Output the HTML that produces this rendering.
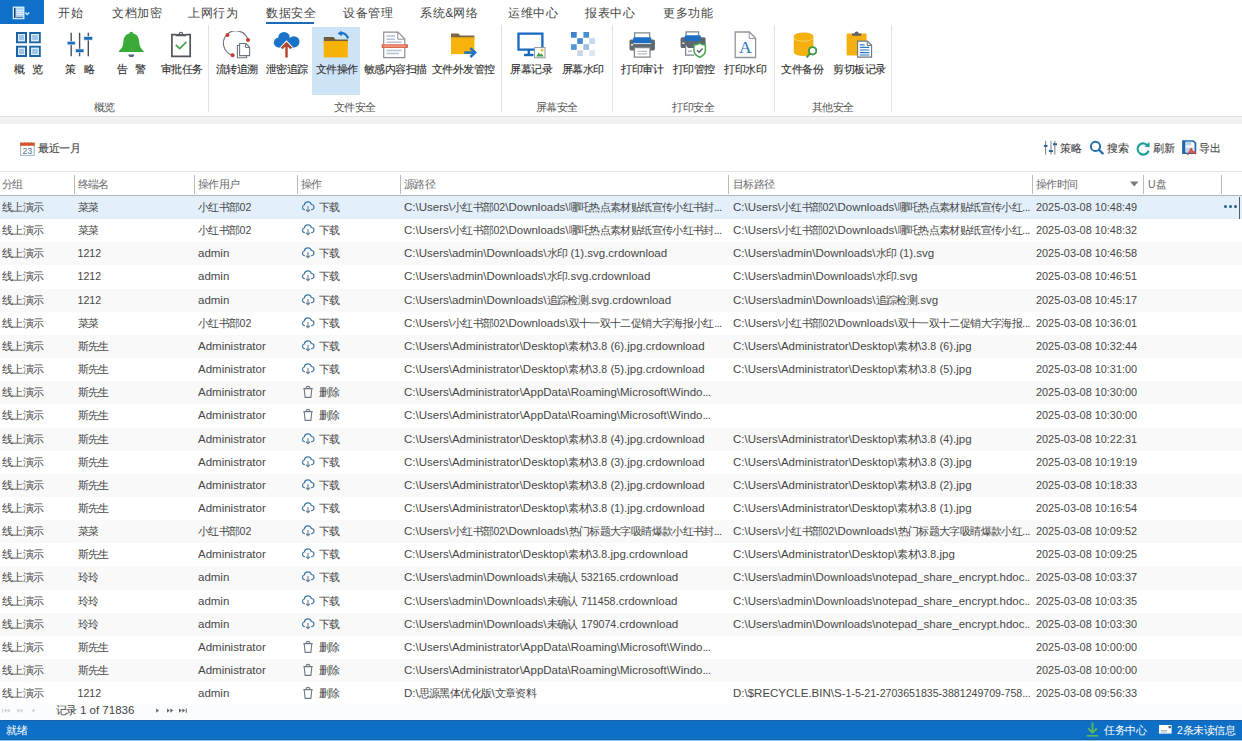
<!DOCTYPE html>
<html><head><meta charset="utf-8"><style>
*{margin:0;padding:0;box-sizing:border-box}
html,body{width:1242px;height:741px;overflow:hidden;background:#fff}
body{position:relative;font-family:"Liberation Sans",sans-serif;color:#3b3b3b}
i{font-style:normal} u{text-decoration:none;font-size:10.6px} s{text-decoration:none;letter-spacing:-0.6px}
.abs{position:absolute} .abs svg{display:block}
#appbtn{position:absolute;left:0;top:0;width:44px;height:24px;background:#106fc6}
.tab{position:absolute;top:4px;height:18px;line-height:18px;font-size:12px;color:#444;white-space:nowrap}
i.m{font-size:12px;letter-spacing:0.6px}
#ul{position:absolute;left:266px;top:22px;width:48px;height:2px;background:#1a6bb8}
#ribbon{position:absolute;left:0;top:24px;width:1242px;height:92px;background:#fff}
.ic{position:absolute}
.ic svg{display:block}
.rl{position:absolute;top:62px;width:80px;text-align:center;font-size:10.5px;line-height:14px;color:#2e2e2e;white-space:nowrap;word-spacing:5px}
i.gc{font-size:10.5px;letter-spacing:-0.5px}
i.rc{font-size:10.5px;letter-spacing:-0.5px;-webkit-text-stroke:0.1px}
.gl{position:absolute;top:100px;text-align:center;font-size:10.5px;line-height:14px;color:#555;white-space:nowrap}
.vs{position:absolute;top:25px;width:1px;height:87px;background:#e3e3e3}
#selbtn{position:absolute;left:312px;top:27px;width:48px;height:68px;background:#cde4f7}
#rbb{position:absolute;left:0;top:116px;width:1242px;height:1px;background:#dedede}
#band{position:absolute;left:0;top:117px;width:1242px;height:7px;background:linear-gradient(#f6f6f6,#eeeeee 75%,#f4f4f4)}
.tbt{position:absolute;top:141px;height:14px;line-height:14px;font-size:10.5px;color:#444;white-space:nowrap}
.tbi{position:absolute}
.tbi svg{display:block}
#hdr{position:absolute;left:0;top:171px;width:1242px;height:25px;background:#fff;border-top:1px solid #e4e4e4;border-bottom:1px solid #b4b4b4}
.ht{position:absolute;top:1px;height:23px;line-height:23px;font-size:10.5px;color:#6a6a6a;white-space:nowrap}
.hs{position:absolute;top:3px;width:1px;height:19px;background:#bababa}
.r{position:absolute;left:0;width:1242px;height:23.15px;background:#fff}
.r.g{background:#f9f9f9}
.r.sel{background:#e3f0fb}
.t{position:absolute;top:0;height:22px;line-height:22px;font-size:11.5px;color:#474747;white-space:nowrap;overflow:hidden}
i.c{font-size:10.5px;letter-spacing:-0.62px}
.t.dt{font-size:10.9px}
.oi{position:absolute;left:0px;top:4px}
.opl{margin-left:18px}
.dots{position:absolute;left:1224px;top:9px;width:14px;height:4px}
.dots b{display:block;position:absolute;top:0;width:3.4px;height:3.4px;border-radius:50%;background:#2a5f87}
.dots b:nth-child(2){left:5px} .dots b:nth-child(3){left:10px}
.cur{position:absolute;left:1238.5px;top:1px;width:1.5px;height:22px;background:#5a5a5a}
#pg{position:absolute;left:0;top:704px;width:1242px;height:16px;background:#fbfcfd}
#pgt{position:absolute;left:56px;top:703px;height:14px;line-height:14px;font-size:11.5px;color:#444;white-space:nowrap}
#status{position:absolute;left:0;top:720px;width:1242px;height:20px;background:#0e6fc6;border-top:1px solid #1a62a8;border-bottom:1px solid #1a64a8}
#sbot{position:absolute;left:0;top:740px;width:1242px;height:1px;background:#8dc0ea}
.st{position:absolute;top:723px;height:14px;line-height:14px;font-size:10.5px;color:#fff;white-space:nowrap}
</style></head><body>
<div id="appbtn"><svg style="position:absolute;left:12px;top:6px" width="20" height="14" viewBox="0 0 20 14"><rect x="1.4" y="1.2" width="10.4" height="11.4" fill="#a8cdef" stroke="#d6f3ff" stroke-width="1.3"/><rect x="2" y="1.8" width="1.4" height="10.2" fill="#123e6e"/><path d="M4.4 4.4H10.8M4.4 6.4H10.8M4.4 8.4H10.8" stroke="#eef8ff" stroke-width="0.9"/><path d="M4.2 11.6H11" stroke="#3c6e9e" stroke-width="1"/><path d="M13.2 6.4L15.2 8.4 17.2 6.4" fill="none" stroke="#c8ecff" stroke-width="1.4"/></svg></div>
<div class="tab" style="left:58px"><i class="m">开始</i></div><div class="tab" style="left:112px"><i class="m">文档加密</i></div><div class="tab" style="left:188px"><i class="m">上网行为</i></div><div class="tab" style="left:266px"><i class="m">数据安全</i></div><div class="tab" style="left:343px"><i class="m">设备管理</i></div><div class="tab" style="left:420px"><i class="m">系统</i>&amp;<i class="m">网络</i></div><div class="tab" style="left:508px"><i class="m">运维中心</i></div><div class="tab" style="left:585px"><i class="m">报表中心</i></div><div class="tab" style="left:663px"><i class="m">更多功能</i></div>
<div id="ul"></div>
<div id="selbtn"></div>
<div class="ic" style="left:15px;top:31px"><svg width="28" height="28" viewBox="0 0 28 28"><g fill="#1d64a6" fill-rule="evenodd"><path d="M1 1H12V12.2H1ZM3 3V10.2H10V3Z"/><path d="M14.2 1H25.8V12.2H14.2ZM16.2 3V10.2H23.8V3Z"/><path d="M1 14.8H12V26H1ZM3 16.8V24H10V16.8Z"/><path d="M14.2 14.8H25.8V26H14.2ZM16.2 16.8V24H23.8V16.8Z"/></g>
<g fill="#9fc4e8" stroke="#e2eefa" stroke-width="1"><rect x="3.5" y="3.5" width="6" height="6.2"/><rect x="16.7" y="3.5" width="6.6" height="6.2"/><rect x="3.5" y="17.3" width="6" height="6.2"/><rect x="16.7" y="17.3" width="6.6" height="6.2"/></g></svg></div><div class="rl" style="left:-11.5px"><i class="rc">概</i> <i class="rc">览</i></div><div class="ic" style="left:66px;top:32px"><svg width="28" height="26" viewBox="0 0 28 26"><g stroke="#4a5058" stroke-width="1.4"><path d="M5.2 0.7V24.3M13.6 0.7V24.3M22.3 0.7V24.3"/></g>
<g fill="#1e6db4" stroke="#d8e9f7" stroke-width="0.6"><rect x="1.2" y="9.4" width="8" height="3.4"/><rect x="9.6" y="17" width="8.3" height="3.4"/><rect x="17.9" y="4.7" width="8.7" height="3.4"/></g></svg></div><div class="rl" style="left:39.7px"><i class="rc">策</i> <i class="rc">略</i></div><div class="ic" style="left:118px;top:31px"><svg width="27" height="27" viewBox="0 0 27 27"><path d="M13.3 0.8C12.2 0.8 11.5 1.6 11.4 2.6 7.4 3.6 5.7 6.4 5.4 10.6 5.1 15 4.4 16.9 0.8 20.2V21H25.8V20.2C22.2 16.9 21.5 15 21.2 10.6 20.9 6.4 19.2 3.6 15.2 2.6 15.1 1.6 14.4 0.8 13.3 0.8Z" fill="#3aab39"/><path d="M10.4 23.4A2.9 2.6 0 0 0 16.2 23.4Z" fill="#4f6580"/></svg></div><div class="rl" style="left:91.5px"><i class="rc">告</i> <i class="rc">警</i></div><div class="ic" style="left:170px;top:31px"><svg width="22" height="27" viewBox="0 0 22 27"><path d="M6.2 3.6H1.9V25.3H20.2V3.6H16" fill="none" stroke="#50555c" stroke-width="1.7"/><path d="M5.6 5.2L6.4 3H8.8A2.2 2.2 0 0 1 13.2 3H15.6L16.4 5.2Z" fill="#50555c"/><circle cx="11" cy="2.6" r="0.8" fill="#fff"/><path d="M5.8 13.8L9.7 17.6 16.4 10.9" fill="none" stroke="#45a04a" stroke-width="1.7"/></svg></div><div class="rl" style="left:141.5px"><i class="rc">审批任务</i></div><div class="ic" style="left:222px;top:31px"><svg width="30" height="28" viewBox="0 0 30 28"><path d="M10.6 24.3A12.5 12.5 0 1 1 26 8.9" fill="none" stroke="#6b7580" stroke-width="1.1"/>
<circle cx="5.5" cy="3.9" r="2" fill="#c63b2f"/><circle cx="26" cy="8.9" r="2" fill="#c63b2f"/><circle cx="10.6" cy="24.3" r="2" fill="#c63b2f"/>
<path d="M17.6 14.5H15.4V26.8H24.5V24.6" fill="none" stroke="#6b7580" stroke-width="1.1"/><path d="M17.6 12.5H23.9L27.6 16.2V24.6H17.6Z" fill="#fff" stroke="#6b7580" stroke-width="1.1"/><path d="M23.6 12.6V16.5H27.5" fill="none" stroke="#6b7580" stroke-width="1"/></svg></div><div class="rl" style="left:196.7px"><i class="rc">流转追溯</i></div><div class="ic" style="left:272px;top:31px"><svg width="28" height="28" viewBox="0 0 28 28"><g fill="#1b73c8"><circle cx="12" cy="6.7" r="5.8"/><circle cx="21.9" cy="10.8" r="5.6"/><circle cx="6.6" cy="11.6" r="4.8"/><rect x="6.6" y="8" width="15.3" height="8.4"/></g><path d="M14.5 26.2V12.6M9.6 17.4L14.5 12.2 19.4 17.4" fill="none" stroke="#fff" stroke-width="4"/><path d="M14.5 26.4V12.6M9.8 17.4L14.5 12.4 19.2 17.4" fill="none" stroke="#b3432a" stroke-width="2.4"/></svg></div><div class="rl" style="left:246.7px"><i class="rc">泄密追踪</i></div><div class="ic" style="left:323px;top:31px"><svg width="30" height="28" viewBox="0 0 30 28"><path d="M0.8 5.9H10.6L12.4 8.5H24.8V12H0.8Z" fill="#705b3c"/><rect x="0.7" y="10" width="24.1" height="16.4" fill="#f7b20a"/><path d="M24.9 7.5A6.2 6.2 0 0 0 17.5 2.3" fill="none" stroke="#1b72c7" stroke-width="2.1"/><path d="M14.6 2.6L18.6 -0.4 18.9 5.2Z" fill="#1b72c7"/></svg></div><div class="rl" style="left:296.5px"><i class="rc">文件操作</i></div><div class="ic" style="left:381px;top:31px"><svg width="28" height="28" viewBox="0 0 28 28"><path d="M2.7 1.2H17L23.8 8V26.7H2.7Z" fill="#fff" stroke="#8a8f96" stroke-width="1.2"/><path d="M16.8 1.2V8.2H23.8" fill="none" stroke="#8a8f96" stroke-width="1"/>
<g stroke="#b5c2d3" stroke-width="1.4"><path d="M5.5 5H14M5.5 8.2H14M5.5 11.3H20.5M5.5 19.5H20.5M5.5 22.5H18"/></g>
<rect x="0.6" y="13.3" width="26.4" height="3.6" rx="0.6" fill="#e1664a"/><path d="M2.6 15.1H24.5" stroke="#f6c8b8" stroke-width="0.9"/></svg></div><div class="rl" style="left:355px"><i class="rc">敏感内容扫描</i></div><div class="ic" style="left:450px;top:33px"><svg width="28" height="26" viewBox="0 0 28 26"><path d="M1 0.6H8.4L10.2 2.4H24.4V6.2H1Z" fill="#7c6748"/><rect x="1" y="4.3" width="23.4" height="16.8" fill="#f6b30c"/><path d="M14.2 19.6H23.4" stroke="#1b72c7" stroke-width="2.5"/><path d="M20.4 15.2L25.2 19.6 20.4 24" fill="none" stroke="#1b72c7" stroke-width="2.5"/></svg></div><div class="rl" style="left:423.2px"><i class="rc">文件外发管控</i></div><div class="ic" style="left:517px;top:32px"><svg width="29" height="27" viewBox="0 0 29 27"><path d="M1.5 1.6H25.4V17.6H1.5Z" fill="#fff" stroke="#1768bf" stroke-width="2.3"/><path d="M7 23H16.5" stroke="#1768bf" stroke-width="2.4"/><path d="M11.8 17.5V22" stroke="#1768bf" stroke-width="2.4"/>
<rect x="17.6" y="15.6" width="10.4" height="10.2" fill="#fff" stroke="#8f979e" stroke-width="1"/><path d="M19.3 24.4L21.7 20.4 23.5 22.8 24.6 21.5 26.7 24.4Z" fill="#3d9b3f"/><circle cx="25.1" cy="18.3" r="1.2" fill="#f0b400"/></svg></div><div class="rl" style="left:491.29999999999995px"><i class="rc">屏幕记录</i></div><div class="ic" style="left:571px;top:32px"><svg width="25" height="25" viewBox="0 0 25 25"><rect x="0" y="0" width="5.7" height="5.7" fill="#3f84c9"/><rect x="12.4" y="0" width="5.7" height="5.7" fill="#4a8ccd"/>
<rect x="6.2" y="6.2" width="5.7" height="5.7" fill="#4a8ccd"/><rect x="18.2" y="6.2" width="5.7" height="5.7" fill="#c5d8ec"/>
<rect x="0" y="12.2" width="5.7" height="5.7" fill="#5796d2"/><rect x="12.4" y="12.2" width="5.7" height="5.7" fill="#9fc0e2"/>
<rect x="6.2" y="18.3" width="5.7" height="5.7" fill="#c8d7e6"/><rect x="18.2" y="18.3" width="5.7" height="5.7" fill="#dde6ef"/></svg></div><div class="rl" style="left:542.5px"><i class="rc">屏幕水印</i></div><div class="ic" style="left:629px;top:32px"><svg width="27" height="26" viewBox="0 0 27 26"><path d="M5.6 5.5V0.9H20.6V5.5" fill="#fff" stroke="#7f868e" stroke-width="1.3"/><rect x="0.5" y="7.4" width="25.4" height="11" rx="1.6" fill="#5f666f"/><rect x="4.2" y="5.2" width="18" height="6.4" rx="1" fill="#1c6fc3"/><path d="M4.2 11.6H22.2" stroke="#e8f1fa" stroke-width="0.9"/><path d="M5.4 15.5H21V25.2H5.4Z" fill="#fff" stroke="#7f868e" stroke-width="1.3"/><path d="M8.5 19.3H18M8.5 21.9H18" stroke="#a4aab0" stroke-width="1"/><rect x="2" y="12.2" width="2" height="1.4" fill="#fff"/></svg></div><div class="rl" style="left:602px"><i class="rc">打印审计</i></div><div class="ic" style="left:680px;top:31px"><svg width="28" height="27" viewBox="0 0 28 27"><path d="M6.1 4.4V0.8H18.6V4.4" fill="#fff" stroke="#7f868e" stroke-width="1.3"/><rect x="0.6" y="6.2" width="25" height="10.8" rx="1.6" fill="#5f666f"/><rect x="4.8" y="4.2" width="16" height="5.8" rx="1" fill="#1c6fc3"/><path d="M5.6 14V24.2H14" fill="#fff" stroke="#7f868e" stroke-width="1.3"/><rect x="2.4" y="11.5" width="2" height="1.4" fill="#fff"/><rect x="8" y="19.6" width="4" height="1.3" fill="#a4aab0"/>
<path d="M19.7 12.1C17.9 13.5 16.1 14 14 14.1V19.3C14 23 16.6 25 19.7 26.3 22.8 25 25.4 23 25.4 19.3V14.1C23.3 14 21.5 13.5 19.7 12.1Z" fill="#fff" stroke="#4aa64c" stroke-width="1.5"/><path d="M17 19.3L19.1 21.3 22.6 17.6" fill="none" stroke="#5a6068" stroke-width="1.4"/></svg></div><div class="rl" style="left:653.5px"><i class="rc">打印管控</i></div><div class="ic" style="left:734px;top:31px"><svg width="23" height="28" viewBox="0 0 23 28"><path d="M1.2 1H15.4L21.6 7.2V26.5H1.2Z" fill="#fff" stroke="#8f969d" stroke-width="1.3"/><path d="M15.2 1V7.4H21.6" fill="none" stroke="#8f969d" stroke-width="1"/><text x="11.4" y="21.6" text-anchor="middle" font-family="Liberation Serif" font-size="17.5" fill="#2a75bf">A</text></svg></div><div class="rl" style="left:705px"><i class="rc">打印水印</i></div><div class="ic" style="left:793px;top:32px"><svg width="24" height="28" viewBox="0 0 24 28"><path d="M0.8 4.2A9.8 3.8 0 0 1 20.4 4.2V20.2A9.8 3.8 0 0 1 0.8 20.2Z" fill="#f4b00e"/><path d="M0.8 5.4A9.8 3.8 0 0 0 20.4 5.4" fill="none" stroke="#ffd66a" stroke-width="1"/>
<circle cx="19.6" cy="18.8" r="3.7" fill="#fff" stroke="#3f9a46" stroke-width="1.9"/><path d="M17 21.4L13.6 25.4" stroke="#3f9a46" stroke-width="2.2"/></svg></div><div class="rl" style="left:762px"><i class="rc">文件备份</i></div><div class="ic" style="left:846px;top:31px"><svg width="28" height="28" viewBox="0 0 28 28"><rect x="0.6" y="2.4" width="20" height="22" rx="1" fill="#f4b00e"/><path d="M6 4.8V2.6H8.6A2 2 0 0 1 12.6 2.6H15.2V4.8Z" fill="#5d5f6e"/>
<path d="M11.6 10.1H21.4L25.6 14.3V26.1H11.6Z" fill="#fff" stroke="#6b7686" stroke-width="1.1"/><path d="M21.2 10.1V14.5H25.6" fill="none" stroke="#6b7686" stroke-width="1"/>
<g stroke="#2f79c2" stroke-width="1.2"><path d="M13.8 13.8H18.6M13.8 16.4H23.4M13.8 19H23.4M13.8 21.6H23.4M13.8 24H23.4"/></g></svg></div><div class="rl" style="left:819.4px"><i class="rc">剪切板记录</i></div><div class="gl" style="left:0px;width:208px"><i class="gc">概览</i></div><div class="gl" style="left:208px;width:293px"><i class="gc">文件安全</i></div><div class="gl" style="left:501px;width:111px"><i class="gc">屏幕安全</i></div><div class="gl" style="left:612px;width:162px"><i class="gc">打印安全</i></div><div class="gl" style="left:774px;width:117px"><i class="gc">其他安全</i></div><div class="vs" style="left:208px"></div><div class="vs" style="left:501px"></div><div class="vs" style="left:612px"></div><div class="vs" style="left:774px"></div><div class="vs" style="left:891px"></div>
<div id="rbb"></div><div id="band"></div>
<div class="tbi" style="left:20px;top:141px"><svg width="15" height="15" viewBox="0 0 15 15"><rect x="0.6" y="2.6" width="13.6" height="11.8" fill="#fff" stroke="#9fb3c6" stroke-width="1"/><rect x="0.1" y="1.6" width="14.6" height="3.2" fill="#d4562c"/><path d="M2 1.2V3M5 1.2V3M8 1.2V3M11 1.2V3" stroke="#d4562c" stroke-width="1"/><text x="7.4" y="13" text-anchor="middle" font-family="Liberation Sans" font-size="8.6" fill="#4f6f8f">23</text></svg></div>
<div class="tbt" style="left:38px"><i class="rc">最近一月</i></div>
<div class="tbi" style="left:1043px;top:140px"><svg width="15" height="16" viewBox="0 0 15 16"><g stroke="#7a8088" stroke-width="1"><path d="M2.6 0.8V14.6M8 0.8V14.6M11.9 0.8V14.6"/></g><g fill="#2f6a98"><rect x="0.9" y="4.9" width="3.6" height="2.1"/><rect x="5.9" y="10" width="4" height="2.1"/><rect x="10" y="3.2" width="4" height="2.1"/></g></svg></div><div class="tbt" style="left:1060px"><i class="rc">策略</i></div>
<div class="tbi" style="left:1089px;top:140px"><svg width="16" height="15" viewBox="0 0 16 15"><circle cx="6.5" cy="6.4" r="4.6" fill="none" stroke="#1f6dae" stroke-width="1.9"/><path d="M9.9 9.7L13.6 13.4" stroke="#1f6dae" stroke-width="2.3" stroke-linecap="round"/></svg></div><div class="tbt" style="left:1107px"><i class="rc">搜索</i></div>
<div class="tbi" style="left:1136px;top:141px"><svg width="15" height="15" viewBox="0 0 15 15"><path d="M12.2 5.4A5.6 5.6 0 1 0 12.6 9.6" fill="none" stroke="#1c9c95" stroke-width="2.1"/><path d="M8.3 5.6L13.4 0.9 13.6 6.2Z" fill="#1c9c95"/></svg></div><div class="tbt" style="left:1153px"><i class="rc">刷新</i></div>
<div class="tbi" style="left:1182px;top:140px"><svg width="15" height="16" viewBox="0 0 15 16"><path d="M1 1H11.2L13.4 3.2V13.2H1Z" fill="#fff" stroke="#1f65a8" stroke-width="1.7"/><path d="M1 1H3.4V13.2H1Z" fill="#1f65a8"/><rect x="4.2" y="1.8" width="5" height="3.6" fill="#b9d3ec"/><rect x="3.6" y="7.6" width="8" height="5" fill="#b9d3ec"/><path d="M5.4 15.2C6.6 13.4 8 11.4 9.2 8.2 9.6 11.2 11 13 13.8 13.8M6.8 12.6C8.6 11.8 11 11.6 13.6 12" fill="none" stroke="#e04a35" stroke-width="1.3"/></svg></div><div class="tbt" style="left:1199px"><i class="rc">导出</i></div>
<div id="hdr"><div class="ht" style="left:2px"><i class="c">分组</i></div><div class="ht" style="left:77.5px"><i class="c">终端名</i></div><div class="ht" style="left:198px"><i class="c">操作用户</i></div><div class="ht" style="left:301px"><i class="c">操作</i></div><div class="ht" style="left:404px"><i class="c">源路径</i></div><div class="ht" style="left:733px"><i class="c">目标路径</i></div><div class="ht" style="left:1036px"><i class="c">操作时间</i></div><div class="ht" style="left:1148px">U<i class="c">盘</i></div><div class="hs" style="left:74px"></div><div class="hs" style="left:194px"></div><div class="hs" style="left:297px"></div><div class="hs" style="left:400px"></div><div class="hs" style="left:728px"></div><div class="hs" style="left:1032px"></div><div class="hs" style="left:1143px"></div><div class="hs" style="left:1221px"></div><svg style="position:absolute;left:1130px;top:9px" width="9" height="6" viewBox="0 0 9 6"><path d="M0 0.5H8.5L4.25 5.5Z" fill="#7a7a7a"/></svg></div>
<div class="r sel" style="top:196.00px"><div class="t" style="left:2px"><i class="c">线上演示</i></div><div class="t" style="left:77.5px"><i class="c">菜菜</i></div><div class="t" style="left:198px"><i class="c">小红书部</i><u>02</u></div><div class="t" style="left:301px"><svg class="oi" width="14" height="14" viewBox="-0.6 -0.2 15.2 15"><path d="M3.6 10.2H3.2A2.6 2.6 0 0 1 3 5.1 3.9 3.9 0 0 1 10.6 4.6 2.8 2.8 0 0 1 10.8 10.2H10.4" fill="none" stroke="#3f7aa6" stroke-width="1.3"/><path d="M7 6.2V12.3M4.9 10.3L7 12.4 9.1 10.3" fill="none" stroke="#6f8493" stroke-width="1.2"/></svg><span class="opl"><i class="c">下载</i></span></div><div class="t p" style="left:404px;width:322px">C:\Users\<i class="c">小红书部</i><u>02</u>\Downloads\<i class="c">哪吒热点素材贴纸宣传小红书封</i><s>...</s></div><div class="t p" style="left:733px;width:297px">C:\Users\<i class="c">小红书部</i><u>02</u>\Downloads\<i class="c">哪吒热点素材贴纸宣传小红</i><s>...</s></div><div class="t dt" style="left:1036px">2025-03-08 10:48:49</div><div class="dots"><b></b><b></b><b></b></div><div class="cur"></div></div>
<div class="r" style="top:219.15px"><div class="t" style="left:2px"><i class="c">线上演示</i></div><div class="t" style="left:77.5px"><i class="c">菜菜</i></div><div class="t" style="left:198px"><i class="c">小红书部</i><u>02</u></div><div class="t" style="left:301px"><svg class="oi" width="14" height="14" viewBox="-0.6 -0.2 15.2 15"><path d="M3.6 10.2H3.2A2.6 2.6 0 0 1 3 5.1 3.9 3.9 0 0 1 10.6 4.6 2.8 2.8 0 0 1 10.8 10.2H10.4" fill="none" stroke="#3f7aa6" stroke-width="1.3"/><path d="M7 6.2V12.3M4.9 10.3L7 12.4 9.1 10.3" fill="none" stroke="#6f8493" stroke-width="1.2"/></svg><span class="opl"><i class="c">下载</i></span></div><div class="t p" style="left:404px;width:322px">C:\Users\<i class="c">小红书部</i><u>02</u>\Downloads\<i class="c">哪吒热点素材贴纸宣传小红书封</i><s>...</s></div><div class="t p" style="left:733px;width:297px">C:\Users\<i class="c">小红书部</i><u>02</u>\Downloads\<i class="c">哪吒热点素材贴纸宣传小红</i><s>...</s></div><div class="t dt" style="left:1036px">2025-03-08 10:48:32</div></div>
<div class="r g" style="top:242.30px"><div class="t" style="left:2px"><i class="c">线上演示</i></div><div class="t" style="left:77.5px"><u>1212</u></div><div class="t" style="left:198px">admin</div><div class="t" style="left:301px"><svg class="oi" width="14" height="14" viewBox="-0.6 -0.2 15.2 15"><path d="M3.6 10.2H3.2A2.6 2.6 0 0 1 3 5.1 3.9 3.9 0 0 1 10.6 4.6 2.8 2.8 0 0 1 10.8 10.2H10.4" fill="none" stroke="#3f7aa6" stroke-width="1.3"/><path d="M7 6.2V12.3M4.9 10.3L7 12.4 9.1 10.3" fill="none" stroke="#6f8493" stroke-width="1.2"/></svg><span class="opl"><i class="c">下载</i></span></div><div class="t p" style="left:404px;width:322px">C:\Users\admin\Downloads\<i class="c">水印</i> (<u>1</u>).svg.crdownload</div><div class="t p" style="left:733px;width:297px">C:\Users\admin\Downloads\<i class="c">水印</i> (<u>1</u>).svg</div><div class="t dt" style="left:1036px">2025-03-08 10:46:58</div></div>
<div class="r" style="top:265.45px"><div class="t" style="left:2px"><i class="c">线上演示</i></div><div class="t" style="left:77.5px"><u>1212</u></div><div class="t" style="left:198px">admin</div><div class="t" style="left:301px"><svg class="oi" width="14" height="14" viewBox="-0.6 -0.2 15.2 15"><path d="M3.6 10.2H3.2A2.6 2.6 0 0 1 3 5.1 3.9 3.9 0 0 1 10.6 4.6 2.8 2.8 0 0 1 10.8 10.2H10.4" fill="none" stroke="#3f7aa6" stroke-width="1.3"/><path d="M7 6.2V12.3M4.9 10.3L7 12.4 9.1 10.3" fill="none" stroke="#6f8493" stroke-width="1.2"/></svg><span class="opl"><i class="c">下载</i></span></div><div class="t p" style="left:404px;width:322px">C:\Users\admin\Downloads\<i class="c">水印</i>.svg.crdownload</div><div class="t p" style="left:733px;width:297px">C:\Users\admin\Downloads\<i class="c">水印</i>.svg</div><div class="t dt" style="left:1036px">2025-03-08 10:46:51</div></div>
<div class="r g" style="top:288.60px"><div class="t" style="left:2px"><i class="c">线上演示</i></div><div class="t" style="left:77.5px"><u>1212</u></div><div class="t" style="left:198px">admin</div><div class="t" style="left:301px"><svg class="oi" width="14" height="14" viewBox="-0.6 -0.2 15.2 15"><path d="M3.6 10.2H3.2A2.6 2.6 0 0 1 3 5.1 3.9 3.9 0 0 1 10.6 4.6 2.8 2.8 0 0 1 10.8 10.2H10.4" fill="none" stroke="#3f7aa6" stroke-width="1.3"/><path d="M7 6.2V12.3M4.9 10.3L7 12.4 9.1 10.3" fill="none" stroke="#6f8493" stroke-width="1.2"/></svg><span class="opl"><i class="c">下载</i></span></div><div class="t p" style="left:404px;width:322px">C:\Users\admin\Downloads\<i class="c">追踪检测</i>.svg.crdownload</div><div class="t p" style="left:733px;width:297px">C:\Users\admin\Downloads\<i class="c">追踪检测</i>.svg</div><div class="t dt" style="left:1036px">2025-03-08 10:45:17</div></div>
<div class="r" style="top:311.75px"><div class="t" style="left:2px"><i class="c">线上演示</i></div><div class="t" style="left:77.5px"><i class="c">菜菜</i></div><div class="t" style="left:198px"><i class="c">小红书部</i><u>02</u></div><div class="t" style="left:301px"><svg class="oi" width="14" height="14" viewBox="-0.6 -0.2 15.2 15"><path d="M3.6 10.2H3.2A2.6 2.6 0 0 1 3 5.1 3.9 3.9 0 0 1 10.6 4.6 2.8 2.8 0 0 1 10.8 10.2H10.4" fill="none" stroke="#3f7aa6" stroke-width="1.3"/><path d="M7 6.2V12.3M4.9 10.3L7 12.4 9.1 10.3" fill="none" stroke="#6f8493" stroke-width="1.2"/></svg><span class="opl"><i class="c">下载</i></span></div><div class="t p" style="left:404px;width:322px">C:\Users\<i class="c">小红书部</i><u>02</u>\Downloads\<i class="c">双十一双十二促销大字海报小红</i><s>...</s></div><div class="t p" style="left:733px;width:297px">C:\Users\<i class="c">小红书部</i><u>02</u>\Downloads\<i class="c">双十一双十二促销大字海报</i><s>...</s></div><div class="t dt" style="left:1036px">2025-03-08 10:36:01</div></div>
<div class="r g" style="top:334.90px"><div class="t" style="left:2px"><i class="c">线上演示</i></div><div class="t" style="left:77.5px"><i class="c">斯先生</i></div><div class="t" style="left:198px">Administrator</div><div class="t" style="left:301px"><svg class="oi" width="14" height="14" viewBox="-0.6 -0.2 15.2 15"><path d="M3.6 10.2H3.2A2.6 2.6 0 0 1 3 5.1 3.9 3.9 0 0 1 10.6 4.6 2.8 2.8 0 0 1 10.8 10.2H10.4" fill="none" stroke="#3f7aa6" stroke-width="1.3"/><path d="M7 6.2V12.3M4.9 10.3L7 12.4 9.1 10.3" fill="none" stroke="#6f8493" stroke-width="1.2"/></svg><span class="opl"><i class="c">下载</i></span></div><div class="t p" style="left:404px;width:322px">C:\Users\Administrator\Desktop\<i class="c">素材</i>\<u>3</u>.<u>8</u> (<u>6</u>).jpg.crdownload</div><div class="t p" style="left:733px;width:297px">C:\Users\Administrator\Desktop\<i class="c">素材</i>\<u>3</u>.<u>8</u> (<u>6</u>).jpg</div><div class="t dt" style="left:1036px">2025-03-08 10:32:44</div></div>
<div class="r" style="top:358.05px"><div class="t" style="left:2px"><i class="c">线上演示</i></div><div class="t" style="left:77.5px"><i class="c">斯先生</i></div><div class="t" style="left:198px">Administrator</div><div class="t" style="left:301px"><svg class="oi" width="14" height="14" viewBox="-0.6 -0.2 15.2 15"><path d="M3.6 10.2H3.2A2.6 2.6 0 0 1 3 5.1 3.9 3.9 0 0 1 10.6 4.6 2.8 2.8 0 0 1 10.8 10.2H10.4" fill="none" stroke="#3f7aa6" stroke-width="1.3"/><path d="M7 6.2V12.3M4.9 10.3L7 12.4 9.1 10.3" fill="none" stroke="#6f8493" stroke-width="1.2"/></svg><span class="opl"><i class="c">下载</i></span></div><div class="t p" style="left:404px;width:322px">C:\Users\Administrator\Desktop\<i class="c">素材</i>\<u>3</u>.<u>8</u> (<u>5</u>).jpg.crdownload</div><div class="t p" style="left:733px;width:297px">C:\Users\Administrator\Desktop\<i class="c">素材</i>\<u>3</u>.<u>8</u> (<u>5</u>).jpg</div><div class="t dt" style="left:1036px">2025-03-08 10:31:00</div></div>
<div class="r g" style="top:381.20px"><div class="t" style="left:2px"><i class="c">线上演示</i></div><div class="t" style="left:77.5px"><i class="c">斯先生</i></div><div class="t" style="left:198px">Administrator</div><div class="t" style="left:301px"><svg class="oi" width="14" height="14" viewBox="0 0 14 14"><path d="M2.3 3.6H11.7M5.2 3.4V2.4A1.8 1 0 0 1 8.8 2.4V3.4M3.2 3.8L4.1 12.4H9.9L10.8 3.8" fill="none" stroke="#707a82" stroke-width="1.1"/></svg><span class="opl"><i class="c">删除</i></span></div><div class="t p" style="left:404px;width:322px">C:\Users\Administrator\AppData\Roaming\Microsoft\Windo<s>...</s></div><div class="t dt" style="left:1036px">2025-03-08 10:30:00</div></div>
<div class="r" style="top:404.35px"><div class="t" style="left:2px"><i class="c">线上演示</i></div><div class="t" style="left:77.5px"><i class="c">斯先生</i></div><div class="t" style="left:198px">Administrator</div><div class="t" style="left:301px"><svg class="oi" width="14" height="14" viewBox="0 0 14 14"><path d="M2.3 3.6H11.7M5.2 3.4V2.4A1.8 1 0 0 1 8.8 2.4V3.4M3.2 3.8L4.1 12.4H9.9L10.8 3.8" fill="none" stroke="#707a82" stroke-width="1.1"/></svg><span class="opl"><i class="c">删除</i></span></div><div class="t p" style="left:404px;width:322px">C:\Users\Administrator\AppData\Roaming\Microsoft\Windo<s>...</s></div><div class="t dt" style="left:1036px">2025-03-08 10:30:00</div></div>
<div class="r g" style="top:427.50px"><div class="t" style="left:2px"><i class="c">线上演示</i></div><div class="t" style="left:77.5px"><i class="c">斯先生</i></div><div class="t" style="left:198px">Administrator</div><div class="t" style="left:301px"><svg class="oi" width="14" height="14" viewBox="-0.6 -0.2 15.2 15"><path d="M3.6 10.2H3.2A2.6 2.6 0 0 1 3 5.1 3.9 3.9 0 0 1 10.6 4.6 2.8 2.8 0 0 1 10.8 10.2H10.4" fill="none" stroke="#3f7aa6" stroke-width="1.3"/><path d="M7 6.2V12.3M4.9 10.3L7 12.4 9.1 10.3" fill="none" stroke="#6f8493" stroke-width="1.2"/></svg><span class="opl"><i class="c">下载</i></span></div><div class="t p" style="left:404px;width:322px">C:\Users\Administrator\Desktop\<i class="c">素材</i>\<u>3</u>.<u>8</u> (<u>4</u>).jpg.crdownload</div><div class="t p" style="left:733px;width:297px">C:\Users\Administrator\Desktop\<i class="c">素材</i>\<u>3</u>.<u>8</u> (<u>4</u>).jpg</div><div class="t dt" style="left:1036px">2025-03-08 10:22:31</div></div>
<div class="r" style="top:450.65px"><div class="t" style="left:2px"><i class="c">线上演示</i></div><div class="t" style="left:77.5px"><i class="c">斯先生</i></div><div class="t" style="left:198px">Administrator</div><div class="t" style="left:301px"><svg class="oi" width="14" height="14" viewBox="-0.6 -0.2 15.2 15"><path d="M3.6 10.2H3.2A2.6 2.6 0 0 1 3 5.1 3.9 3.9 0 0 1 10.6 4.6 2.8 2.8 0 0 1 10.8 10.2H10.4" fill="none" stroke="#3f7aa6" stroke-width="1.3"/><path d="M7 6.2V12.3M4.9 10.3L7 12.4 9.1 10.3" fill="none" stroke="#6f8493" stroke-width="1.2"/></svg><span class="opl"><i class="c">下载</i></span></div><div class="t p" style="left:404px;width:322px">C:\Users\Administrator\Desktop\<i class="c">素材</i>\<u>3</u>.<u>8</u> (<u>3</u>).jpg.crdownload</div><div class="t p" style="left:733px;width:297px">C:\Users\Administrator\Desktop\<i class="c">素材</i>\<u>3</u>.<u>8</u> (<u>3</u>).jpg</div><div class="t dt" style="left:1036px">2025-03-08 10:19:19</div></div>
<div class="r g" style="top:473.80px"><div class="t" style="left:2px"><i class="c">线上演示</i></div><div class="t" style="left:77.5px"><i class="c">斯先生</i></div><div class="t" style="left:198px">Administrator</div><div class="t" style="left:301px"><svg class="oi" width="14" height="14" viewBox="-0.6 -0.2 15.2 15"><path d="M3.6 10.2H3.2A2.6 2.6 0 0 1 3 5.1 3.9 3.9 0 0 1 10.6 4.6 2.8 2.8 0 0 1 10.8 10.2H10.4" fill="none" stroke="#3f7aa6" stroke-width="1.3"/><path d="M7 6.2V12.3M4.9 10.3L7 12.4 9.1 10.3" fill="none" stroke="#6f8493" stroke-width="1.2"/></svg><span class="opl"><i class="c">下载</i></span></div><div class="t p" style="left:404px;width:322px">C:\Users\Administrator\Desktop\<i class="c">素材</i>\<u>3</u>.<u>8</u> (<u>2</u>).jpg.crdownload</div><div class="t p" style="left:733px;width:297px">C:\Users\Administrator\Desktop\<i class="c">素材</i>\<u>3</u>.<u>8</u> (<u>2</u>).jpg</div><div class="t dt" style="left:1036px">2025-03-08 10:18:33</div></div>
<div class="r" style="top:496.95px"><div class="t" style="left:2px"><i class="c">线上演示</i></div><div class="t" style="left:77.5px"><i class="c">斯先生</i></div><div class="t" style="left:198px">Administrator</div><div class="t" style="left:301px"><svg class="oi" width="14" height="14" viewBox="-0.6 -0.2 15.2 15"><path d="M3.6 10.2H3.2A2.6 2.6 0 0 1 3 5.1 3.9 3.9 0 0 1 10.6 4.6 2.8 2.8 0 0 1 10.8 10.2H10.4" fill="none" stroke="#3f7aa6" stroke-width="1.3"/><path d="M7 6.2V12.3M4.9 10.3L7 12.4 9.1 10.3" fill="none" stroke="#6f8493" stroke-width="1.2"/></svg><span class="opl"><i class="c">下载</i></span></div><div class="t p" style="left:404px;width:322px">C:\Users\Administrator\Desktop\<i class="c">素材</i>\<u>3</u>.<u>8</u> (<u>1</u>).jpg.crdownload</div><div class="t p" style="left:733px;width:297px">C:\Users\Administrator\Desktop\<i class="c">素材</i>\<u>3</u>.<u>8</u> (<u>1</u>).jpg</div><div class="t dt" style="left:1036px">2025-03-08 10:16:54</div></div>
<div class="r g" style="top:520.10px"><div class="t" style="left:2px"><i class="c">线上演示</i></div><div class="t" style="left:77.5px"><i class="c">菜菜</i></div><div class="t" style="left:198px"><i class="c">小红书部</i><u>02</u></div><div class="t" style="left:301px"><svg class="oi" width="14" height="14" viewBox="-0.6 -0.2 15.2 15"><path d="M3.6 10.2H3.2A2.6 2.6 0 0 1 3 5.1 3.9 3.9 0 0 1 10.6 4.6 2.8 2.8 0 0 1 10.8 10.2H10.4" fill="none" stroke="#3f7aa6" stroke-width="1.3"/><path d="M7 6.2V12.3M4.9 10.3L7 12.4 9.1 10.3" fill="none" stroke="#6f8493" stroke-width="1.2"/></svg><span class="opl"><i class="c">下载</i></span></div><div class="t p" style="left:404px;width:322px">C:\Users\<i class="c">小红书部</i><u>02</u>\Downloads\<i class="c">热门标题大字吸睛爆款小红书封</i><s>...</s></div><div class="t p" style="left:733px;width:297px">C:\Users\<i class="c">小红书部</i><u>02</u>\Downloads\<i class="c">热门标题大字吸睛爆款小红</i><s>...</s></div><div class="t dt" style="left:1036px">2025-03-08 10:09:52</div></div>
<div class="r" style="top:543.25px"><div class="t" style="left:2px"><i class="c">线上演示</i></div><div class="t" style="left:77.5px"><i class="c">斯先生</i></div><div class="t" style="left:198px">Administrator</div><div class="t" style="left:301px"><svg class="oi" width="14" height="14" viewBox="-0.6 -0.2 15.2 15"><path d="M3.6 10.2H3.2A2.6 2.6 0 0 1 3 5.1 3.9 3.9 0 0 1 10.6 4.6 2.8 2.8 0 0 1 10.8 10.2H10.4" fill="none" stroke="#3f7aa6" stroke-width="1.3"/><path d="M7 6.2V12.3M4.9 10.3L7 12.4 9.1 10.3" fill="none" stroke="#6f8493" stroke-width="1.2"/></svg><span class="opl"><i class="c">下载</i></span></div><div class="t p" style="left:404px;width:322px">C:\Users\Administrator\Desktop\<i class="c">素材</i>\<u>3</u>.<u>8</u>.jpg.crdownload</div><div class="t p" style="left:733px;width:297px">C:\Users\Administrator\Desktop\<i class="c">素材</i>\<u>3</u>.<u>8</u>.jpg</div><div class="t dt" style="left:1036px">2025-03-08 10:09:25</div></div>
<div class="r g" style="top:566.40px"><div class="t" style="left:2px"><i class="c">线上演示</i></div><div class="t" style="left:77.5px"><i class="c">玲玲</i></div><div class="t" style="left:198px">admin</div><div class="t" style="left:301px"><svg class="oi" width="14" height="14" viewBox="-0.6 -0.2 15.2 15"><path d="M3.6 10.2H3.2A2.6 2.6 0 0 1 3 5.1 3.9 3.9 0 0 1 10.6 4.6 2.8 2.8 0 0 1 10.8 10.2H10.4" fill="none" stroke="#3f7aa6" stroke-width="1.3"/><path d="M7 6.2V12.3M4.9 10.3L7 12.4 9.1 10.3" fill="none" stroke="#6f8493" stroke-width="1.2"/></svg><span class="opl"><i class="c">下载</i></span></div><div class="t p" style="left:404px;width:322px">C:\Users\admin\Downloads\<i class="c">未确认</i> <u>532165</u>.crdownload</div><div class="t p" style="left:733px;width:297px">C:\Users\admin\Downloads\notepad_share_encrypt.hdoc<s>...</s>.</div><div class="t dt" style="left:1036px">2025-03-08 10:03:37</div></div>
<div class="r" style="top:589.55px"><div class="t" style="left:2px"><i class="c">线上演示</i></div><div class="t" style="left:77.5px"><i class="c">玲玲</i></div><div class="t" style="left:198px">admin</div><div class="t" style="left:301px"><svg class="oi" width="14" height="14" viewBox="-0.6 -0.2 15.2 15"><path d="M3.6 10.2H3.2A2.6 2.6 0 0 1 3 5.1 3.9 3.9 0 0 1 10.6 4.6 2.8 2.8 0 0 1 10.8 10.2H10.4" fill="none" stroke="#3f7aa6" stroke-width="1.3"/><path d="M7 6.2V12.3M4.9 10.3L7 12.4 9.1 10.3" fill="none" stroke="#6f8493" stroke-width="1.2"/></svg><span class="opl"><i class="c">下载</i></span></div><div class="t p" style="left:404px;width:322px">C:\Users\admin\Downloads\<i class="c">未确认</i> <u>711458</u>.crdownload</div><div class="t p" style="left:733px;width:297px">C:\Users\admin\Downloads\notepad_share_encrypt.hdoc<s>...</s>.</div><div class="t dt" style="left:1036px">2025-03-08 10:03:35</div></div>
<div class="r g" style="top:612.70px"><div class="t" style="left:2px"><i class="c">线上演示</i></div><div class="t" style="left:77.5px"><i class="c">玲玲</i></div><div class="t" style="left:198px">admin</div><div class="t" style="left:301px"><svg class="oi" width="14" height="14" viewBox="-0.6 -0.2 15.2 15"><path d="M3.6 10.2H3.2A2.6 2.6 0 0 1 3 5.1 3.9 3.9 0 0 1 10.6 4.6 2.8 2.8 0 0 1 10.8 10.2H10.4" fill="none" stroke="#3f7aa6" stroke-width="1.3"/><path d="M7 6.2V12.3M4.9 10.3L7 12.4 9.1 10.3" fill="none" stroke="#6f8493" stroke-width="1.2"/></svg><span class="opl"><i class="c">下载</i></span></div><div class="t p" style="left:404px;width:322px">C:\Users\admin\Downloads\<i class="c">未确认</i> <u>179074</u>.crdownload</div><div class="t p" style="left:733px;width:297px">C:\Users\admin\Downloads\notepad_share_encrypt.hdoc<s>...</s></div><div class="t dt" style="left:1036px">2025-03-08 10:03:30</div></div>
<div class="r" style="top:635.85px"><div class="t" style="left:2px"><i class="c">线上演示</i></div><div class="t" style="left:77.5px"><i class="c">斯先生</i></div><div class="t" style="left:198px">Administrator</div><div class="t" style="left:301px"><svg class="oi" width="14" height="14" viewBox="0 0 14 14"><path d="M2.3 3.6H11.7M5.2 3.4V2.4A1.8 1 0 0 1 8.8 2.4V3.4M3.2 3.8L4.1 12.4H9.9L10.8 3.8" fill="none" stroke="#707a82" stroke-width="1.1"/></svg><span class="opl"><i class="c">删除</i></span></div><div class="t p" style="left:404px;width:322px">C:\Users\Administrator\AppData\Roaming\Microsoft\Windo<s>...</s></div><div class="t dt" style="left:1036px">2025-03-08 10:00:00</div></div>
<div class="r g" style="top:659.00px"><div class="t" style="left:2px"><i class="c">线上演示</i></div><div class="t" style="left:77.5px"><i class="c">斯先生</i></div><div class="t" style="left:198px">Administrator</div><div class="t" style="left:301px"><svg class="oi" width="14" height="14" viewBox="0 0 14 14"><path d="M2.3 3.6H11.7M5.2 3.4V2.4A1.8 1 0 0 1 8.8 2.4V3.4M3.2 3.8L4.1 12.4H9.9L10.8 3.8" fill="none" stroke="#707a82" stroke-width="1.1"/></svg><span class="opl"><i class="c">删除</i></span></div><div class="t p" style="left:404px;width:322px">C:\Users\Administrator\AppData\Roaming\Microsoft\Windo<s>...</s></div><div class="t dt" style="left:1036px">2025-03-08 10:00:00</div></div>
<div class="r" style="top:682.15px"><div class="t" style="left:2px"><i class="c">线上演示</i></div><div class="t" style="left:77.5px"><u>1212</u></div><div class="t" style="left:198px">admin</div><div class="t" style="left:301px"><svg class="oi" width="14" height="14" viewBox="0 0 14 14"><path d="M2.3 3.6H11.7M5.2 3.4V2.4A1.8 1 0 0 1 8.8 2.4V3.4M3.2 3.8L4.1 12.4H9.9L10.8 3.8" fill="none" stroke="#707a82" stroke-width="1.1"/></svg><span class="opl"><i class="c">删除</i></span></div><div class="t p" style="left:404px;width:322px">D:\<i class="c">思源黑体优化版</i>\<i class="c">文章资料</i></div><div class="t p" style="left:733px;width:297px">D:\$RECYCLE.BIN\S-<u>1-5-21-2703651835-3881249709-758</u><s>...</s></div><div class="t dt" style="left:1036px">2025-03-08 09:56:33</div></div>
<div id="pg"></div>
<svg style="position:absolute;left:1px;top:706px" width="190" height="9" viewBox="0 0 190 9">
<g fill="#cdd1d5"><rect x="1.2" y="2.4" width="1" height="4.4"/><path d="M5.6 2.4V6.8L2.8 4.6Z"/><path d="M8.8 2.4V6.8L6 4.6Z"/><path d="M18.2 2.4V6.8L15.4 4.6Z"/><path d="M21.4 2.4V6.8L18.6 4.6Z"/><path d="M33.4 2.4V6.8L30.6 4.6Z"/></g>
<g fill="#5f656c"><path d="M155.2 2.4V6.8L158 4.6Z"/><path d="M166 2.4V6.8L168.8 4.6Z"/><path d="M169.4 2.4V6.8L172.2 4.6Z"/><path d="M178 2.4V6.8L180.8 4.6Z"/><path d="M181.4 2.4V6.8L184.2 4.6Z"/><rect x="184.8" y="2.4" width="1" height="4.4"/></g></svg>
<div id="pgt"><i class="c">记录</i> 1 of 71836</div>
<div id="status"></div><div id="sbot"></div>
<div class="st" style="left:6px"><i class="gc">就绪</i></div>
<div class="abs" style="left:1086px;top:722px"><svg width="13" height="15" viewBox="0 0 13 15"><path d="M6.5 0.5V10.5M2.2 6.4L6.5 10.7 10.8 6.4" fill="none" stroke="#5cb85c" stroke-width="1.8"/><path d="M0.8 13.8H12.2" stroke="#5cb85c" stroke-width="1.6"/></svg></div>
<div class="st" style="left:1104px"><i class="gc">任务中心</i></div>
<div class="abs" style="left:1159px;top:725px"><svg width="13" height="9" viewBox="0 0 13 9"><rect x="0" y="0" width="12.6" height="8.6" fill="#fff"/><path d="M2 5.5H8M2 7H8" stroke="#9aa3ab" stroke-width="0.8"/><rect x="9.6" y="1" width="2.2" height="2.2" fill="#4a5560"/></svg></div>
<div class="st" style="left:1177px">2<i class="gc">条未读信息</i></div>
</body></html>
